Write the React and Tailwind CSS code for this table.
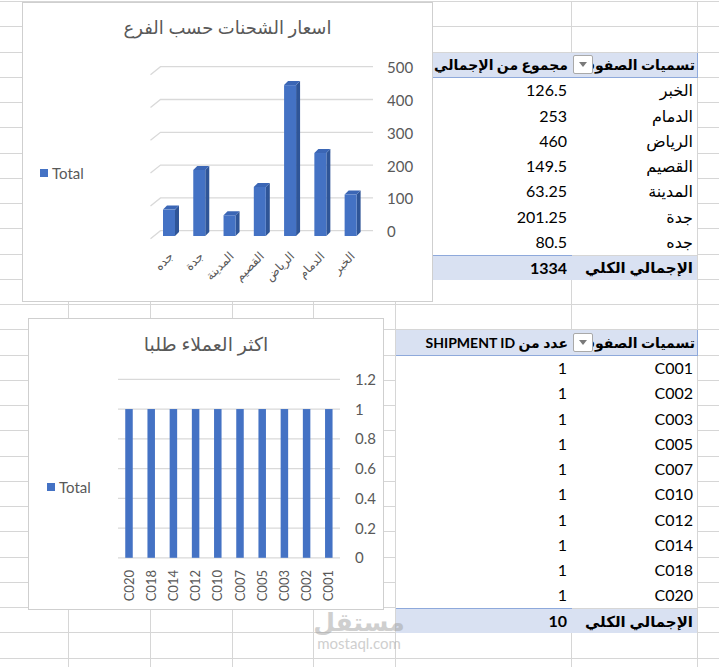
import React from "react";

const FONT = "font-['Lato','DejaVu_Sans',sans-serif]";
const SVGFONT = "Lato, 'DejaVu Sans', sans-serif";
const GRID = "border-[#d6d6d6]";

const topData = [
  ["الخبر", "126.5"],
  ["الدمام", "253"],
  ["الرياض", "460"],
  ["القصيم", "149.5"],
  ["المدينة", "63.25"],
  ["جدة", "201.25"],
  ["جده", "80.5"],
];
const bottomData = ["C001", "C002", "C003", "C005", "C007", "C010", "C012", "C014", "C018", "C020"];

function rowKind(r) {
  if (r === 2) return { t: "header", label: "مجموع من الإجمالي" };
  if (r >= 3 && r <= 9) return { t: "data", label: topData[r - 3][0], value: topData[r - 3][1] };
  if (r === 10) return { t: "total", value: "1334" };
  if (r === 13) return { t: "header", label: "عدد من SHIPMENT ID" };
  if (r >= 14 && r <= 23) return { t: "data", label: bottomData[r - 14], value: "1" };
  if (r === 24) return { t: "total", value: "10" };
  return { t: "blank" };
}

function Cell({ last }) {
  return <div className={`border-b ${GRID} ${last ? "" : "border-r"}`} />;
}

function DropButton() {
  return (
    <div className="ml-[1px] w-[20px] h-[19px] shrink-0 bg-white border border-[#a9a9a9] rounded-[2px] flex items-center justify-center">
      <svg width="8" height="5" viewBox="0 0 8 5">
        <path d="M0 0 L8 0 L4 5 Z" fill="#7a7a7a" />
      </svg>
    </div>
  );
}

function Row({ r }) {
  const k = rowKind(r);
  const h = "h-[25.25px]";
  const base = [0, 1, 2, 3, 4].map((i) => <Cell key={i} />);
  if (k.t === "blank") {
    return (
      <div className={`grid grid-cols-[69px_82px_82px_81px_82px_176px_126px_1fr] ${h}`}>
        {base}
        <Cell />
        <Cell />
        <Cell last />
      </div>
    );
  }
  let c5, c6;
  if (k.t === "header") {
    c5 = (
      <div className="bg-[#d9e1f2] border-b border-[#8ea9db] flex items-center justify-end pr-[4px] font-bold text-[14px] text-black whitespace-nowrap overflow-hidden">
        <span dir="rtl">{k.label}</span>
      </div>
    );
    c6 = (
      <div className="bg-[#d9e1f2] border-b border-[#8ea9db] border-r flex items-center">
        <DropButton />
        <div className="flex-1 min-w-0 overflow-hidden whitespace-nowrap text-right pr-[2px] font-bold text-[14px] text-black" dir="rtl">
          تسميات الصفوف
        </div>
      </div>
    );
  } else if (k.t === "data") {
    c5 = (
      <div className="bg-white flex items-center justify-end pr-[5px] text-[16px] text-black">{k.value}</div>
    );
    c6 = (
      <div className={`bg-white border-r ${GRID} flex items-center justify-end pr-[4px] text-[16px] text-black`}>
        <span dir="rtl">{k.label}</span>
      </div>
    );
  } else {
    c5 = (
      <div className="bg-[#d9e1f2] border-t border-[#8ea9db] flex items-center justify-end pr-[5px] font-bold text-[16px] text-black">
        {k.value}
      </div>
    );
    c6 = (
      <div className={`bg-[#d9e1f2] border-t border-[#8ea9db] border-r ${GRID} flex items-center justify-end pr-[4px] font-bold text-[15px] text-black`}>
        <span dir="rtl">الإجمالي الكلي</span>
      </div>
    );
  }
  return (
    <div className={`grid grid-cols-[69px_82px_82px_81px_82px_176px_126px_1fr] ${h}`}>
      {base}
      {c5}
      {c6}
      <Cell last />
    </div>
  );
}

function Legend() {
  return (
    <div className="flex items-center gap-[4px] text-[15px] text-[#595959]">
      <span className="w-[8px] h-[8px] bg-[#4472c4] inline-block" />
      <span>Total</span>
    </div>
  );
}

function Chart1Plot() {
  const ys = [15.7, 48.5, 81.3, 114.1, 146.9, 179.7];
  const labels = ["500", "400", "300", "200", "100", "0"];
  const bars = [
    ["جده", 80.5],
    ["جدة", 201.25],
    ["المدينة", 63.25],
    ["القصيم", 149.5],
    ["الرياض", 460],
    ["الدمام", 253],
    ["الخبر", 126.5],
  ];
  const bottom = 185;
  return (
    <svg width="291" height="250" viewBox="0 0 291 250" style={{ fontFamily: SVGFONT }}>
      {ys.map((y, i) => (
        <g key={i}>
          <polyline points={`9.5,${y + 8} 19.5,${y} 232,${y}`} fill="none" stroke="#d9d9d9" strokeWidth="1.3" />
          <text x="246" y={y + 6.5} fontSize="15" fill="#595959">
            {labels[i]}
          </text>
        </g>
      ))}
      {bars.map(([name, v], i) => {
        const x = 22 + i * 30.27;
        const top = bottom - v * 0.328;
        const w = 12;
        const d = 4;
        const ax = x + 11;
        const ay = bottom + 21;
        return (
          <g key={i}>
            <polygon points={`${x + w},${top} ${x + w + d},${top - d} ${x + w + d},${bottom - d} ${x + w},${bottom}`} fill="#2f5597" />
            <polygon points={`${x},${top} ${x + d},${top - d} ${x + w + d},${top - d} ${x + w},${top}`} fill="#3b66b5" />
            <rect x={x} y={top} width={w} height={bottom - top} fill="#4472c4" />
            <text
              x={ax}
              y={ay}
              fontSize="12"
              fill="#595959"
              textAnchor="end"
              transform={`rotate(-45 ${ax} ${ay})`}
            >
              {name}
            </text>
          </g>
        );
      })}
    </svg>
  );
}

function Chart2Plot() {
  const labels = ["1.2", "1", "0.8", "0.6", "0.4", "0.2", "0"];
  const step = 29.75;
  const y0 = 10.3;
  const names = ["C020", "C018", "C014", "C012", "C010", "C007", "C005", "C003", "C002", "C001"];
  const bottom = y0 + 6 * step;
  const top = y0 + step;
  return (
    <svg width="275" height="240" viewBox="0 0 275 240" style={{ fontFamily: SVGFONT }}>
      {labels.map((l, i) => (
        <g key={i}>
          <line x1="10" x2="232" y1={y0 + i * step} y2={y0 + i * step} stroke="#d9d9d9" strokeWidth="1.3" />
          <text x="247" y={y0 + i * step + 5.5} fontSize="15" fill="#595959">
            {l}
          </text>
        </g>
      ))}
      {names.map((n, i) => {
        const cx = 21 + i * 22.2;
        return (
          <g key={i}>
            <rect x={cx - 3.75} y={top} width="7.5" height={bottom - top} fill="#4472c4" />
            <text
              x={cx + 4.5}
              y={201}
              fontSize="13"
              fill="#595959"
              textAnchor="end"
              transform={`rotate(-90 ${cx + 4.5} 201)`}
            >
              {n}
            </text>
          </g>
        );
      })}
    </svg>
  );
}

export default function App() {
  const rows = Array.from({ length: 27 }, (_, i) => i);
  return (
    <div className={`relative w-[719px] h-[667px] overflow-hidden bg-white ${FONT}`}>
      <div className={`h-[2px] border-b ${GRID}`} />
      {rows.map((r) => (
        <Row key={r} r={r} />
      ))}

      {/* Chart 1 */}
      <div className="absolute left-[22px] top-[2px] w-[411px] h-[300px] bg-white border border-[#cfcfcf] flex flex-col">
        <div className="h-[48px] flex items-center justify-center text-[18px] text-[#595959]">
          <span dir="rtl">اسعار الشحنات حسب الفرع</span>
        </div>
        <div className="flex h-[250px]">
          <div className="w-[118px] flex items-center pl-[17px] pb-[6px]">
            <Legend />
          </div>
          <Chart1Plot />
        </div>
      </div>

      {/* Chart 2 */}
      <div className="absolute left-[28px] top-[318px] w-[356px] h-[292px] bg-white border border-[#cfcfcf] flex flex-col">
        <div className="h-[50px] flex items-center justify-center text-[19px] text-[#595959]">
          <span dir="rtl">اكثر العملاء طلبا</span>
        </div>
        <div className="flex h-[240px]">
          <div className="w-[79px] flex items-center pl-[18px] pb-[4px]">
            <Legend />
          </div>
          <Chart2Plot />
        </div>
      </div>

      {/* watermark */}
      <div className="absolute left-[314px] top-[609px] w-[90px] flex flex-col items-center text-[#a0a0a0] opacity-50 pointer-events-none">
        <span className="text-[25px] font-bold leading-none" dir="rtl">مستقل</span>
        <span className="text-[15px] leading-tight">mostaql.com</span>
      </div>
    </div>
  );
}
